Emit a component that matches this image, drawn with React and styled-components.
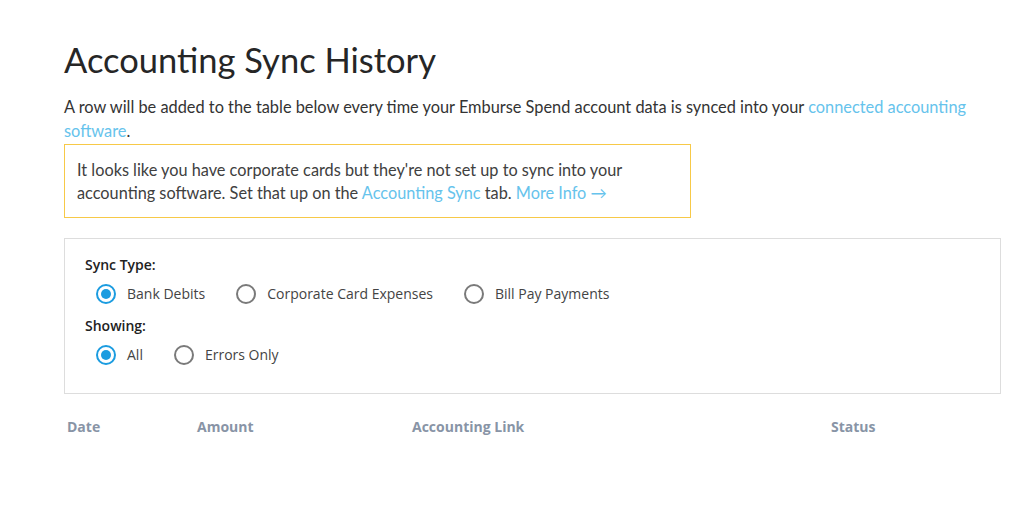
import styled, { createGlobalStyle } from "styled-components";

const GlobalStyle = createGlobalStyle`
  body {
    margin: 0;
    background: #fff;
    font-family: Lato, "Open Sans", sans-serif;
  }
`;

const Page = styled.div`
  padding: 38px 20px 40px 64px;
  box-sizing: border-box;
  width: 1021px;
`;

const Title = styled.h1`
  font-family: Lato, sans-serif;
  font-weight: 400;
  font-size: 34.5px;
  line-height: 44px;
  color: #262626;
  margin: 0 0 13px;
`;

const Intro = styled.p`
  font-family: Lato, sans-serif;
  font-size: 16.35px;
  line-height: 24px;
  color: #333;
  margin: 0 0 1px;
  max-width: 930px;
`;

const Link = styled.a`
  color: #66c3ec;
  text-decoration: none;
  cursor: pointer;
`;

const Notice = styled.div`
  width: 627px;
  box-sizing: border-box;
  border: 1px solid #f7c948;
  padding: 13px 12px 13px;
  font-family: Lato, sans-serif;
  font-size: 16.3px;
  line-height: 23px;
  color: #404040;
  margin-bottom: 20px;
`;

const FilterPanel = styled.div`
  border: 1px solid #dddddd;
  width: 937px;
  box-sizing: border-box;
  padding: 16px 20px 16px;
  font-family: "Open Sans", sans-serif;
`;

const GroupLabel = styled.div`
  font-size: 14px;
  font-weight: 600;
  color: #222;
  line-height: 20px;
`;

const RadioRow = styled.div`
  display: flex;
  align-items: center;
  gap: 31px;
  padding: 9px 0 12px 11px;
`;

const RadioOption = styled.label`
  display: flex;
  align-items: center;
  gap: 11px;
  font-size: 14px;
  line-height: 20px;
  color: #444;
  cursor: pointer;
`;

const RadioCircle = styled.span`
  width: 20px;
  height: 20px;
  box-sizing: border-box;
  border-radius: 50%;
  border: 2px solid ${(p) => (p.$checked ? "#1b9ce0" : "#7a7a7a")};
  display: flex;
  align-items: center;
  justify-content: center;

  &::after {
    content: "";
    width: 10px;
    height: 10px;
    border-radius: 50%;
    background: ${(p) => (p.$checked ? "#1b9ce0" : "transparent")};
  }
`;

const TableHead = styled.div`
  display: grid;
  grid-template-columns: 130px 215px 419px 1fr;
  padding: 23px 3px 0;
  font-family: "Open Sans", sans-serif;
  font-size: 14px;
  font-weight: 700;
  color: #8894a6;
`;

const Radio = ({ checked, children }) => (
  <RadioOption>
    <RadioCircle $checked={checked} />
    {children}
  </RadioOption>
);

export default function App() {
  return (
    <Page>
      <GlobalStyle />
      <Title>Accounting Sync History</Title>
      <Intro>
        A row will be added to the table below every time your Emburse Spend
        account data is synced into your{" "}
        <Link>connected accounting software</Link>.
      </Intro>
      <Notice>
        It looks like you have corporate cards but they're not set up to sync
        into your accounting software. Set that up on the{" "}
        <Link>Accounting Sync</Link> tab. <Link>More Info →</Link>
      </Notice>
      <FilterPanel>
        <GroupLabel>Sync Type:</GroupLabel>
        <RadioRow>
          <Radio checked>Bank Debits</Radio>
          <Radio>Corporate Card Expenses</Radio>
          <Radio>Bill Pay Payments</Radio>
        </RadioRow>
        <GroupLabel>Showing:</GroupLabel>
        <RadioRow>
          <Radio checked>All</Radio>
          <Radio>Errors Only</Radio>
        </RadioRow>
      </FilterPanel>
      <TableHead>
        <span>Date</span>
        <span>Amount</span>
        <span>Accounting Link</span>
        <span>Status</span>
      </TableHead>
    </Page>
  );
}
